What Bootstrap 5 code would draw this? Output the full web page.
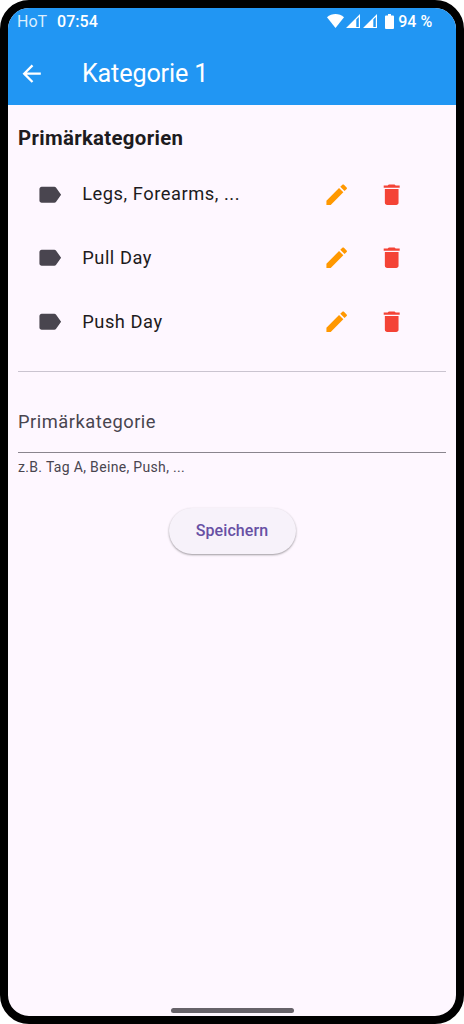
<!DOCTYPE html>
<html lang="de">
<head>
<meta charset="utf-8">
<meta name="viewport" content="width=device-width, initial-scale=1">
<title>Kategorie 1</title>
<link href="https://cdn.jsdelivr.net/npm/bootstrap@5.3.0/dist/css/bootstrap.min.css" rel="stylesheet">
<style>
body{font-family:Roboto,"Liberation Sans",sans-serif;background:#fff;color:#1d1b20}
.phone{height:1024px;background:#fef7ff;border:8px solid #000;border-radius:29px}
.topbar{background:#2196f3;height:97.3px}
.status{height:26px;font-size:16px;line-height:26px;padding-left:9px}
.carrier{color:#dceefd;width:40px;letter-spacing:0;padding-top:1px}
.clock{font-weight:500;letter-spacing:.05px;padding-top:1px}
.percent{font-weight:500;letter-spacing:.1px;margin-left:4px;margin-right:23.5px;padding-top:1px}
.app-title{font-size:25.2px;line-height:30px;margin-left:36.5px;letter-spacing:-.15px}
.titlerow{height:71.3px;padding-left:10px;padding-top:8px}
.ico{width:27.4px;height:27.4px;fill:currentColor;flex:none}
.content{padding:0 10px}
.heading{font-size:20.4px;line-height:26px;font-weight:700;margin:20px 0 0;letter-spacing:.31px}
.categories{padding-top:11px}
.cat{height:63.8px;padding:0 41px 0 17.8px;font-size:18.3px;letter-spacing:.54px}
.cat .lbl{color:#49454f;margin-right:19px}
.cat .actions{gap:27.6px}
.cat .name{margin-top:-1px}
.edit{color:#ff9800}
.del{color:#f44336}
.rule{height:1px;background:#cac4d0;margin-top:17.4px}
.field{color:#49454f;font-size:18.3px;letter-spacing:.52px;padding-top:36px;line-height:28px;height:81px;border-bottom:1px solid #8a858e}
.hint{color:#49454f;font-size:14px;letter-spacing:.33px;line-height:18px;margin-top:5px}
.save{width:127px;height:46px;margin-top:32px;background:#f7f2fa;color:#6750a4;font-size:16px;font-weight:500;letter-spacing:.11px;box-shadow:0 1px 2px rgba(0,0,0,.3),0 1px 3px rgba(0,0,0,.1)}
.homebar{width:123px;height:5px;background:#67636a;margin-bottom:3.5px}
</style>
</head>
<body>
<svg class="d-none">
<symbol id="label" viewBox="0 0 24 24"><path d="M17.63 5.84C17.27 5.33 16.67 5 16 5L5 5.01C3.9 5.01 3 5.9 3 7v10c0 1.1.9 1.99 2 1.99L16 19c.67 0 1.27-.33 1.63-.84L22 12l-4.37-6.16z"/></symbol>
<symbol id="edit" viewBox="0 0 24 24"><path d="M3 17.25V21h3.75L17.81 9.94l-3.75-3.75L3 17.25zM20.71 7.04c.39-.39.39-1.02 0-1.41l-2.34-2.34c-.39-.39-1.02-.39-1.41 0l-1.83 1.83 3.75 3.75 1.83-1.83z"/></symbol>
<symbol id="delete" viewBox="0 0 24 24"><path d="M6 19c0 1.1.9 2 2 2h8c1.1 0 2-.9 2-2V7H6v12zM19 4h-3.5l-1-1h-5l-1 1H5v2h14V4z"/></symbol>
<symbol id="signal" viewBox="0 0 14 14"><path fill-rule="evenodd" d="M14 0v14H0L14 0zM10.3 5.5V12.9h2.5V3L10.3 5.5z"/></symbol>
</svg>
<div class="phone d-flex flex-column overflow-hidden">
  <header class="topbar text-white">
    <div class="status d-flex align-items-center">
      <span class="carrier">HoT</span>
      <span class="clock">07:54</span>
      <div class="d-flex align-items-center ms-auto">
        <svg width="17" height="14" viewBox="0 0 17 14" fill="#fff"><path d="M0 3.3C4.8-1 12.2-1 17 3.3L8.5 14z"/></svg>
        <svg width="16" height="14" viewBox="-2 0 16 14" fill="#fff"><use href="#signal" width="14" height="14"/></svg>
        <svg width="17" height="14" viewBox="-3 0 17 14" fill="#fff"><use href="#signal" width="14" height="14"/></svg>
        <svg class="ms-2" width="9" height="15" viewBox="0 0 9 15" fill="#fff"><path d="M3 0h3v1.5h2q1 0 1 1V14q0 1-1 1H1q-1 0-1-1V2.5q0-1 1-1h2z"/></svg>
        <span class="percent">94 %</span>
      </div>
    </div>
    <div class="titlerow d-flex align-items-center">
      <svg class="ico" viewBox="0 0 24 24"><path d="M20 11H7.83l5.59-5.59L12 4l-8 8 8 8 1.41-1.41L7.83 13H20v-2z"/></svg>
      <h1 class="app-title fw-normal mb-0">Kategorie 1</h1>
    </div>
  </header>
  <main class="content flex-grow-1">
    <h2 class="heading">Primärkategorien</h2>
    <ul class="categories list-unstyled mb-0">
      <li class="cat d-flex align-items-center"><svg class="ico lbl"><use href="#label"/></svg><span class="name">Legs, Forearms, ...</span><span class="actions d-flex ms-auto"><svg class="ico edit"><use href="#edit"/></svg><svg class="ico del"><use href="#delete"/></svg></span></li>
      <li class="cat d-flex align-items-center"><svg class="ico lbl"><use href="#label"/></svg><span class="name">Pull Day</span><span class="actions d-flex ms-auto"><svg class="ico edit"><use href="#edit"/></svg><svg class="ico del"><use href="#delete"/></svg></span></li>
      <li class="cat d-flex align-items-center"><svg class="ico lbl"><use href="#label"/></svg><span class="name">Push Day</span><span class="actions d-flex ms-auto"><svg class="ico edit"><use href="#edit"/></svg><svg class="ico del"><use href="#delete"/></svg></span></li>
    </ul>
    <div class="rule"></div>
    <div class="field">Primärkategorie</div>
    <div class="hint">z.B. Tag A, Beine, Push, ...</div>
    <button type="button" class="save btn rounded-pill border-0 d-block mx-auto p-0">Speichern</button>
  </main>
  <div class="homebar rounded-pill mx-auto"></div>
</div>
<script src="https://cdn.jsdelivr.net/npm/bootstrap@5.3.0/dist/js/bootstrap.bundle.min.js"></script>
</body>
</html>
